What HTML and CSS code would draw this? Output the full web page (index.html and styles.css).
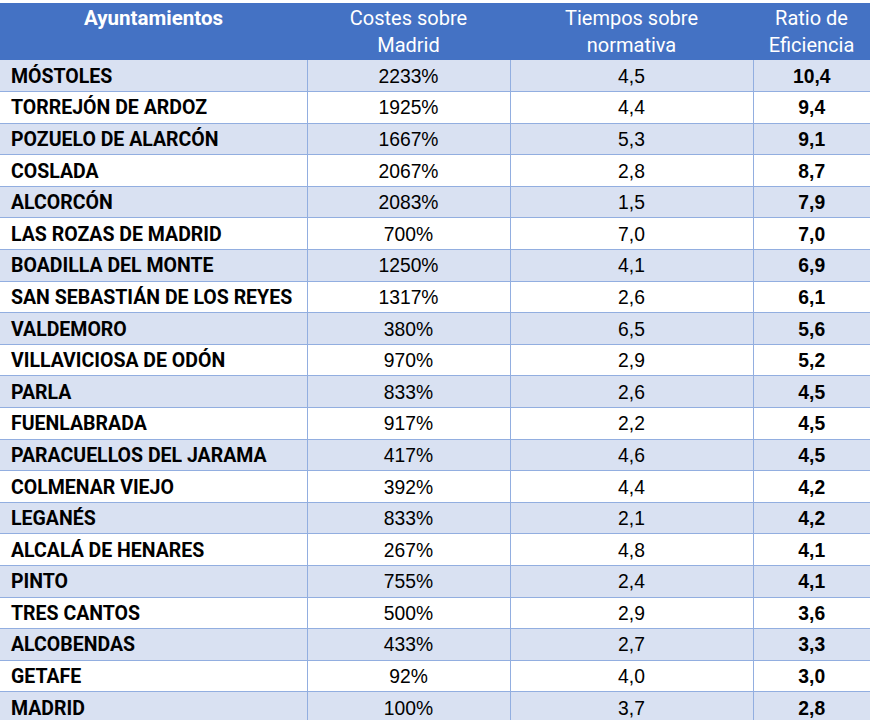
FILE: index.html
```html
<!DOCTYPE html>
<html lang="es">
<head>
<meta charset="utf-8">
<title>Ratio de Eficiencia</title>
<link rel="stylesheet" href="styles.css">
</head>
<body>
<table class="tbl">
  <colgroup>
    <col class="c1"><col class="c2"><col class="c3"><col class="c4">
  </colgroup>
  <thead>
    <tr>
      <th class="h-name">Ayuntamientos</th>
      <th>Costes sobre<br>Madrid</th>
      <th>Tiempos sobre<br>normativa</th>
      <th>Ratio de<br>Eficiencia</th>
    </tr>
  </thead>
  <tbody>
    <tr class="band"><td class="name">MÓSTOLES</td><td>2233%</td><td>4,5</td><td class="ratio">10,4</td></tr>
    <tr><td class="name">TORREJÓN DE ARDOZ</td><td>1925%</td><td>4,4</td><td class="ratio">9,4</td></tr>
    <tr class="band"><td class="name">POZUELO DE ALARCÓN</td><td>1667%</td><td>5,3</td><td class="ratio">9,1</td></tr>
    <tr><td class="name">COSLADA</td><td>2067%</td><td>2,8</td><td class="ratio">8,7</td></tr>
    <tr class="band"><td class="name">ALCORCÓN</td><td>2083%</td><td>1,5</td><td class="ratio">7,9</td></tr>
    <tr><td class="name">LAS ROZAS DE MADRID</td><td>700%</td><td>7,0</td><td class="ratio">7,0</td></tr>
    <tr class="band"><td class="name">BOADILLA DEL MONTE</td><td>1250%</td><td>4,1</td><td class="ratio">6,9</td></tr>
    <tr><td class="name">SAN SEBASTIÁN DE LOS REYES</td><td>1317%</td><td>2,6</td><td class="ratio">6,1</td></tr>
    <tr class="band"><td class="name">VALDEMORO</td><td>380%</td><td>6,5</td><td class="ratio">5,6</td></tr>
    <tr><td class="name">VILLAVICIOSA DE ODÓN</td><td>970%</td><td>2,9</td><td class="ratio">5,2</td></tr>
    <tr class="band"><td class="name">PARLA</td><td>833%</td><td>2,6</td><td class="ratio">4,5</td></tr>
    <tr><td class="name">FUENLABRADA</td><td>917%</td><td>2,2</td><td class="ratio">4,5</td></tr>
    <tr class="band"><td class="name">PARACUELLOS DEL JARAMA</td><td>417%</td><td>4,6</td><td class="ratio">4,5</td></tr>
    <tr><td class="name">COLMENAR VIEJO</td><td>392%</td><td>4,4</td><td class="ratio">4,2</td></tr>
    <tr class="band"><td class="name">LEGANÉS</td><td>833%</td><td>2,1</td><td class="ratio">4,2</td></tr>
    <tr><td class="name">ALCALÁ DE HENARES</td><td>267%</td><td>4,8</td><td class="ratio">4,1</td></tr>
    <tr class="band"><td class="name">PINTO</td><td>755%</td><td>2,4</td><td class="ratio">4,1</td></tr>
    <tr><td class="name">TRES CANTOS</td><td>500%</td><td>2,9</td><td class="ratio">3,6</td></tr>
    <tr class="band"><td class="name">ALCOBENDAS</td><td>433%</td><td>2,7</td><td class="ratio">3,3</td></tr>
    <tr><td class="name">GETAFE</td><td>92%</td><td>4,0</td><td class="ratio">3,0</td></tr>
    <tr class="band"><td class="name">MADRID</td><td>100%</td><td>3,7</td><td class="ratio">2,8</td></tr>
  </tbody>
</table>
</body>
</html>
```

FILE: styles.css
```css
html, body {
  margin: 0;
  padding: 0;
  background: #ffffff;
}

body {
  padding-top: 3px;
  font-family: "Liberation Sans", Arial, sans-serif;
  color: #000000;
}

.tbl {
  width: 870px;
  border-collapse: collapse;
  table-layout: fixed;
}

.c1 { width: 307px; }
.c2 { width: 203px; }
.c3 { width: 243px; }
.c4 { width: 117px; }

.tbl th {
  background: #4472c4;
  color: #ffffff;
  font-family: Roboto, "Liberation Sans", sans-serif;
  font-weight: 400;
  font-size: 20px;
  line-height: 27px;
  height: 57px;
  padding: 1px 0 1px 0;
  text-align: center;
  vertical-align: middle;
  box-sizing: border-box;
}

.tbl th.h-name {
  font-weight: 700;
  font-size: 20.5px;
  vertical-align: top;
  padding-top: 2px;
  padding-left: 0;
}

.tbl td {
  height: 31.6px;
  box-sizing: border-box;
  padding: 2px 0 0 0;
  border-bottom: 1px solid #92aee0;
  border-left: 1px solid #92aee0;
  text-align: center;
  vertical-align: middle;
  font-size: 19.3px;
  line-height: 26px;
}

.tbl td.name {
  border-left: none;
  text-align: left;
  padding-left: 11px;
  font-family: Roboto, "Liberation Sans", sans-serif;
  font-weight: 700;
  font-size: 19.5px;
  white-space: nowrap;
}

.tbl td.ratio {
  font-weight: 700;
}

.tbl tr.band td {
  background: #d9e1f2;
}
```
